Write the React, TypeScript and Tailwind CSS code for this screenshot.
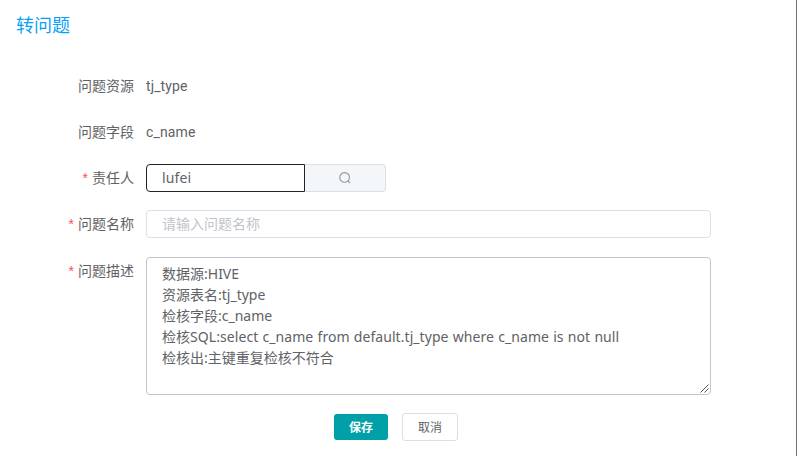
import type { ReactNode } from "react";

function Row({ label, required, height, children }: { label: string; required?: boolean; height: string; children: ReactNode }) {
  return (
    <div className={`flex items-start ${height}`}>
      <label className="mr-3 flex h-7 w-[134px] shrink-0 items-center justify-end whitespace-nowrap">
        {required && <span className="mr-1 font-['Liberation_Sans',sans-serif] text-[#ff4d4f]">*</span>}
        {label}
      </label>
      {children}
    </div>
  );
}

const description = [
  "数据源:HIVE",
  "资源表名:tj_type",
  "检核字段:c_name",
  "检核SQL:select c_name from default.tj_type where c_name is not null",
  "检核出:主键重复检核不符合",
];

export default function App() {
  return (
    <div className="h-[456px] w-[797px] overflow-hidden border-r border-[#707070] bg-white font-['Roboto','Noto_Sans_CJK_SC',sans-serif] text-sm text-[#606266]">
      <h1 className="flex h-[50px] items-center pl-4 pt-px text-lg text-[#0a9ffb]">转问题</h1>
      <form className="pt-[22px]" onSubmit={(e) => e.preventDefault()}>
        <Row label="问题资源" height="h-[46px]">
          <span className="leading-7 tracking-[0.1px]">tj_type</span>
        </Row>
        <Row label="问题字段" height="h-[46px]">
          <span className="leading-7 tracking-[0.15px]">c_name</span>
        </Row>
        <Row label="责任人" required height="h-[46px]">
          <div className="flex h-7">
            <div className="flex w-[159px] items-center rounded-l border border-[#222] pl-[15px] font-['Noto_Sans','Noto_Sans_CJK_SC',sans-serif] tracking-[0.1px]">lufei</div>
            <button type="button" className="flex w-[81px] items-center justify-center rounded-r border border-l-0 border-[#dcdfe6] bg-[#f3f7fa]">
              <svg className="h-3 w-3" viewBox="0 0 12 12" fill="none" stroke="#94979c" strokeWidth="1.1">
                <circle cx="5.6" cy="5.4" r="4.8" />
                <path d="M8.9 8.9l2.2 2.2" />
              </svg>
            </button>
          </div>
        </Row>
        <Row label="问题名称" required height="h-[47px]">
          <div className="flex h-7 w-[565px] items-center rounded border border-[#dcdfe6] pl-[15px] text-[#c0c4cc]">请输入问题名称</div>
        </Row>
        <Row label="问题描述" required height="h-[138px]">
          <div className="flex h-[138px] w-[565px] items-end rounded border border-[#c0c4cc] font-['Noto_Sans','Noto_Sans_CJK_SC',sans-serif]">
            <div className="h-full flex-1 pl-[15px] pt-[5px] leading-[21px] [word-spacing:0.5px]">
              {description.map((line) => (
                <p key={line} className={`h-[21px] whitespace-nowrap ${line.includes("SQL") ? "tracking-[0.06px]" : ""}`}>{line}</p>
              ))}
            </div>
            <svg className="mb-px mr-px h-[9px] w-[9px]" viewBox="0 0 9 9" stroke="#555" fill="none">
              <path d="M0.5 8.5l8-8M4.5 8.5l4-4" />
            </svg>
          </div>
        </Row>
        <div className="flex items-center gap-3.5 pl-[334px] pt-[18px] text-xs">
          <button className="flex h-[26px] w-[54px] items-center justify-center rounded-[3px] bg-[#00a0a8] pt-px font-bold text-white">保存</button>
          <button type="button" className="flex h-7 w-14 items-center justify-center rounded-[3px] border border-[#dcdfe6] pt-px">取消</button>
        </div>
      </form>
    </div>
  );
}
